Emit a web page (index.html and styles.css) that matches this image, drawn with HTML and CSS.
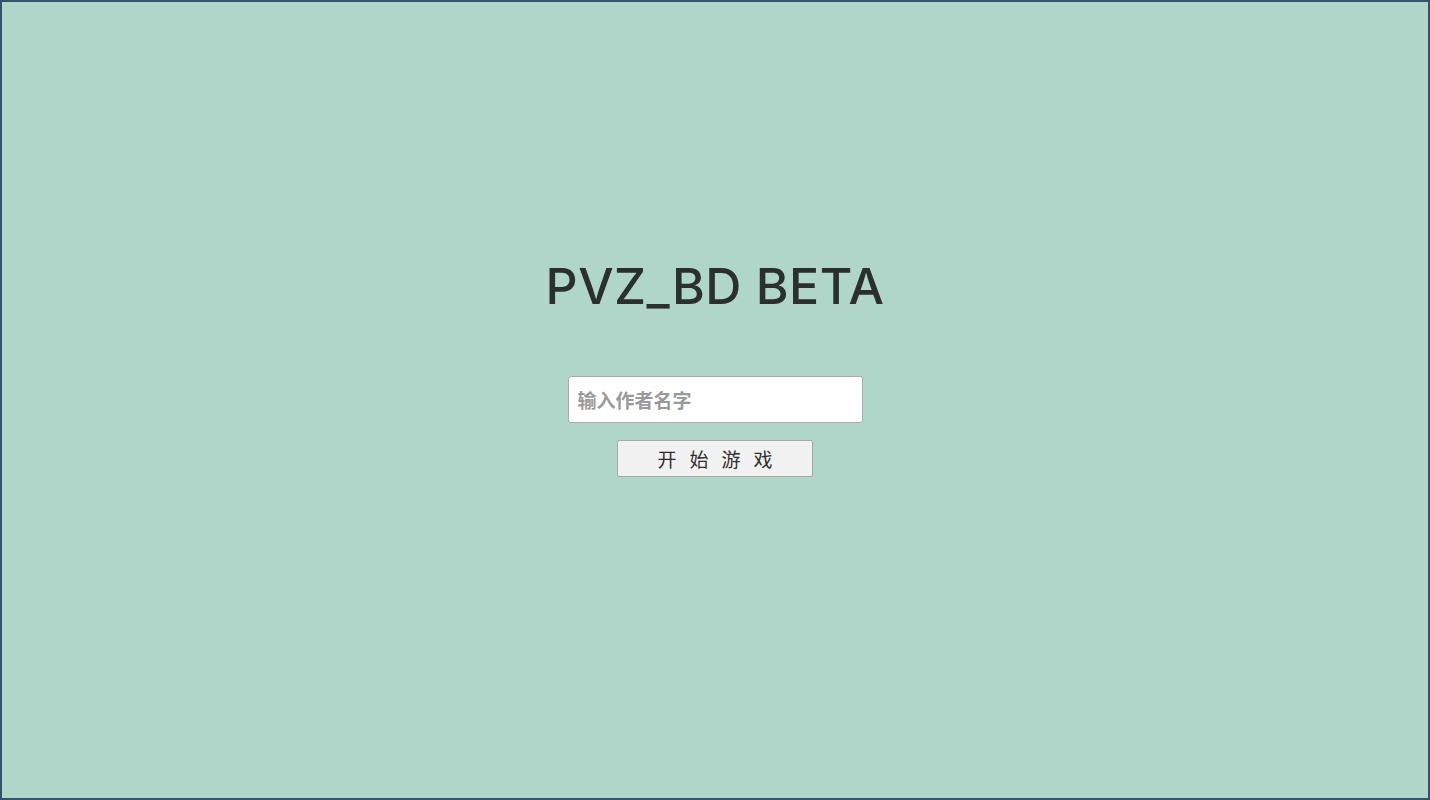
FILE: index.html
```html
<!DOCTYPE html>
<html lang="zh">
<head>
<meta charset="utf-8">
<title>PVZ_BD BETA</title>
<link rel="stylesheet" href="styles.css">
</head>
<body>
<div class="frame">
  <main class="login">
    <h1 class="title">PVZ_BD BETA</h1>
    <input class="name-input" type="text" placeholder="输入作者名字">
    <button class="start-btn" type="button">开始游戏</button>
  </main>
</div>
</body>
</html>
```
FILE: styles.css
```css
html, body {
  margin: 0;
  padding: 0;
  height: 100%;
}
body {
  background: #b0d5c9;
  font-family: "Inter", "Noto Sans CJK SC", sans-serif;
}
.frame {
  box-sizing: border-box;
  height: 800px;
  border: 2px solid #34526a;
  background: #b0d5c9;
}
.login {
  display: flex;
  flex-direction: column;
  align-items: center;
  padding-top: 251px;
}
.title {
  margin: 0;
  font-family: "Inter", sans-serif;
  font-weight: 500;
  font-size: 50px;
  line-height: 66px;
  color: #2b302d;
  letter-spacing: 0.5px;
}
.name-input {
  box-sizing: border-box;
  margin-top: 57px;
  width: 295px;
  height: 47px;
  padding: 0 9px;
  border: 1px solid #a8aca9;
  border-radius: 3px;
  background: #ffffff;
  font-family: "Noto Sans CJK SC", sans-serif;
  font-size: 19px;
  font-weight: 700;
  color: #333;
  outline: none;
}
.name-input::placeholder {
  color: #9a9a9a;
  font-weight: 700;
}
.start-btn {
  box-sizing: border-box;
  margin-top: 17px;
  width: 196px;
  height: 37px;
  padding: 0 0 0 13px;
  border: 1px solid #a5a9a6;
  border-radius: 2px;
  background: #f1f1f1;
  font-family: "Noto Sans CJK SC", sans-serif;
  font-size: 19px;
  letter-spacing: 13px;
  color: #2e2e2e;
  line-height: 35px;
}
```
